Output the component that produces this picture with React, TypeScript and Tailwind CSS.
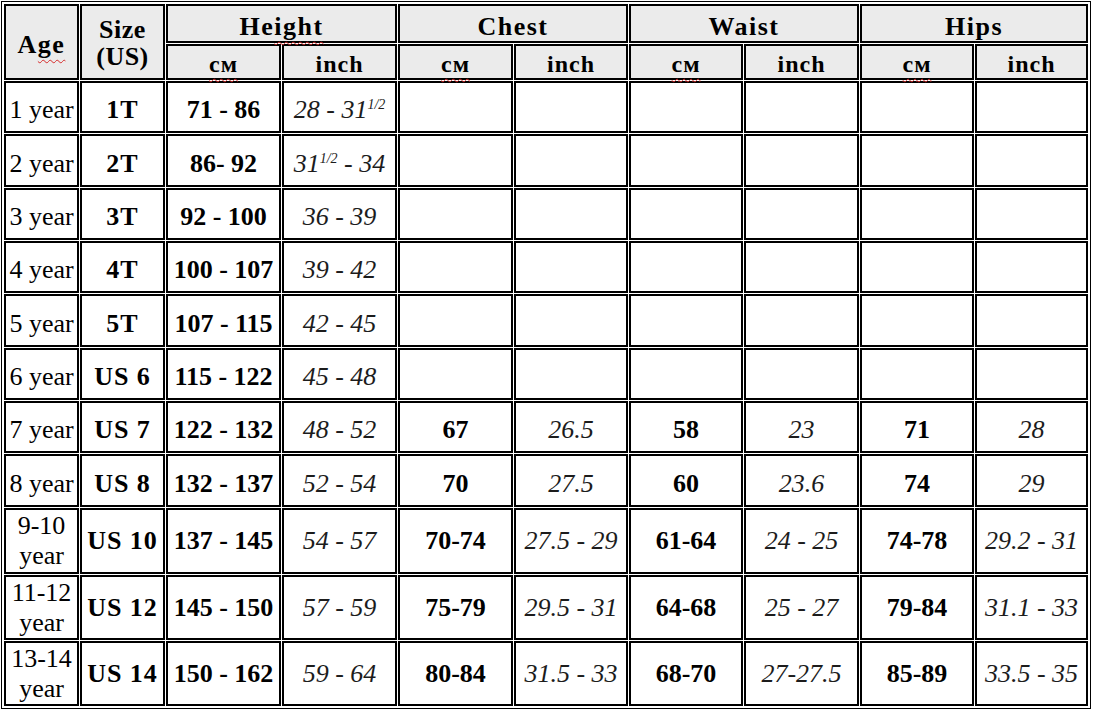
import React from "react";

// Kids size chart, old-school html table look
const serif = "font-['Liberation_Serif','Times_New_Roman',serif]";

type Cell = React.ReactNode;

const half = <sup className="relative -top-[9px] text-[14px] align-baseline">1/2</sup>;

const rows: { h: string; two?: boolean; age: Cell; cells: Cell[] }[] = [
  { h: "h-[52px]", age: "1 year", cells: ["1T", "71 - 86", <>28 - 31{half}</>, "", "", "", "", "", ""] },
  { h: "h-[53px]", age: "2 year", cells: ["2T", "86- 92", <>31{half} - 34</>, "", "", "", "", "", ""] },
  { h: "h-[52px]", age: "3 year", cells: ["3T", "92 - 100", "36 - 39", "", "", "", "", "", ""] },
  { h: "h-[52px]", age: "4 year", cells: ["4T", "100 - 107", "39 - 42", "", "", "", "", "", ""] },
  { h: "h-[53px]", age: "5 year", cells: ["5T", "107 - 115", "42 - 45", "", "", "", "", "", ""] },
  { h: "h-[52px]", age: "6 year", cells: ["US 6", "115 - 122", "45 - 48", "", "", "", "", "", ""] },
  { h: "h-[52px]", age: "7 year", cells: ["US 7", "122 - 132", "48 - 52", "67", "26.5", "58", "23", "71", "28"] },
  { h: "h-[53px]", age: "8 year", cells: ["US 8", "132 - 137", "52 - 54", "70", "27.5", "60", "23.6", "74", "29"] },
  { h: "h-[66px]", two: true, age: <>9-10<br />year</>, cells: ["US 10", "137 - 145", "54 - 57", "70-74", "27.5 - 29", "61-64", "24 - 25", "74-78", "29.2 - 31"] },
  { h: "h-[65px]", two: true, age: <>11-12<br />year</>, cells: ["US 12", "145 - 150", "57 - 59", "75-79", "29.5 - 31", "64-68", "25 - 27", "79-84", "31.1 - 33"] },
  { h: "h-[65px]", two: true, age: <>13-14<br />year</>, cells: ["US 14", "150 - 162", "59 - 64", "80-84", "31.5 - 33", "68-70", "27-27.5", "85-89", "33.5 - 35"] },
];

const cellBase = "border-2 border-black px-0 pb-0 text-center align-middle";
const headCell = `${cellBase} pt-[6px] leading-[26px] bg-[#ebebeb] font-bold text-[26px] tracking-[1.5px]`;
const subCell = `${cellBase} pt-[4px] leading-[26px] bg-[#ebebeb] font-bold text-[24px] tracking-[1px]`;

function Wavy({ children }: { children: React.ReactNode }) {
  return (
    <span className="underline decoration-wavy decoration-[#d62b2b] decoration-1 underline-offset-[6px]">
      {children}
    </span>
  );
}

export default function App() {
  const groups = ["Height", "Chest", "Waist", "Hips"];
  return (
    <div className="w-[1094px] h-[712px] bg-white overflow-hidden text-black">
      <table
        className={`${serif} mt-px ml-px table-fixed border-separate border-spacing-[1px] border border-black p-px leading-[30px]`}
      >
        <colgroup>
          <col className="w-[75px]" />
          <col className="w-[85px]" />
          <col className="w-[115px]" />
          <col className="w-[115px]" />
          <col className="w-[115px]" />
          <col className="w-[114px]" />
          <col className="w-[114px]" />
          <col className="w-[115px]" />
          <col className="w-[114px]" />
          <col className="w-[113px]" />
        </colgroup>
        <thead>
          <tr className="h-[39px]">
            <th rowSpan={2} className={headCell}>
              A<Wavy>ge</Wavy>
            </th>
            <th rowSpan={2} className={`${cellBase} pt-px bg-[#ebebeb] font-bold text-[26px] leading-[27px] tracking-[0.5px]`}>
              Size
              <br />
              (US)
            </th>
            {groups.map((g) => (
              <th key={g} colSpan={2} className={headCell}>
                {g === "Height" ? (
                  <>
                    He<Wavy>ight</Wavy>
                  </>
                ) : (
                  g
                )}
              </th>
            ))}
          </tr>
          <tr className="h-[36px]">
            {groups.map((g) => (
              <React.Fragment key={g}>
                <th className={subCell}>
                  <Wavy>см</Wavy>
                </th>
                <th className={subCell}>inch</th>
              </React.Fragment>
            ))}
          </tr>
        </thead>
        <tbody>
          {rows.map((r, i) => {
            const pad = r.two ? "pt-0" : "pt-[6px]";
            return (
              <tr key={i} className={r.h}>
                <td className={`${cellBase} ${pad} text-[26px]`}>{r.age}</td>
                {r.cells.map((c, j) => (
                  <td
                    key={j}
                    className={`${cellBase} ${pad} text-[26px] ${
                      j === 0
                        ? "font-bold tracking-[1px]"
                        : j % 2 === 1
                          ? "font-bold"
                          : "italic text-[#1c1c1c]"
                    }`}
                  >
                    {c}
                  </td>
                ))}
              </tr>
            );
          })}
        </tbody>
      </table>
    </div>
  );
}
